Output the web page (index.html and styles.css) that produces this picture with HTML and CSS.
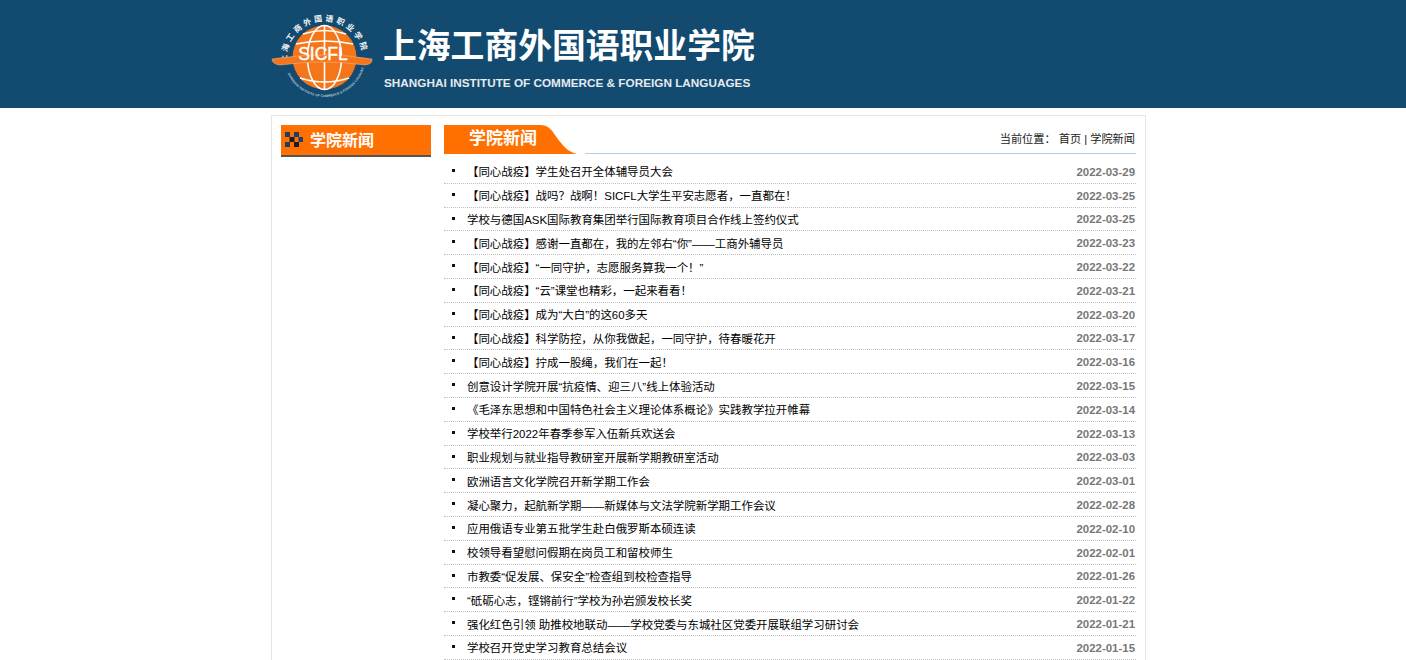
FILE: index.html
```html
<!DOCTYPE html>
<html lang="zh-CN">
<head>
<meta charset="utf-8">
<title>学院新闻</title>
<link rel="stylesheet" href="styles.css">
</head>
<body>
<header class="site-header">
  <div class="brand">
    <svg class="emblem" width="106" height="94" viewBox="0 0 106 94">
      <defs>
        <path id="arcTop" d="M17 56 A38 38 0 0 1 92 44"/>
        <path id="arcBottom" d="M15 59 A41 41 0 0 0 94 59"/>
      </defs>
      <text class="emblem-cn"><textPath href="#arcTop" startOffset="1">上海工商外国语职业学院</textPath></text>
      <text class="emblem-en"><textPath href="#arcBottom" startOffset="7">SHANGHAI INSTITUTE OF COMMERCE &amp; FOREIGN LANGUAGES</textPath></text>
      <circle cx="54.500" cy="49.500" r="32" fill="#f5761a"/>
      <g fill="none" stroke="#fff" stroke-width="1.600">
        <ellipse cx="54.500" cy="49.500" rx="17" ry="32"/>
        <path d="M54.500 17.500V81.500"/>
        <path d="M33 26Q54.500 19 76 26"/>
        <path d="M26 36Q54.500 30 83 36"/>
        <path d="M30 70Q54.500 78 79 70"/>
      </g>
      <path d="M2 51Q54 43 102 51Q103 56 95 57Q54 51 10 57Q2 56 2 51Z" fill="#f5761a" stroke="#f0c09a" stroke-width=".5"/>
      <text class="emblem-mark" x="53" y="52" text-anchor="middle">SICFL</text>
    </svg>
    <div class="brand-names">
      <div class="brand-cn">上海工商外国语职业学院</div>
      <div class="brand-en">SHANGHAI INSTITUTE OF COMMERCE &amp; FOREIGN LANGUAGES</div>
    </div>
  </div>
</header>
<main class="page">
  <aside class="side">
    <h2 class="side-title">
      <svg class="checker" width="18" height="15" viewBox="0 0 18 15">
        <rect class="cell-navy" x="0" y="0" width="5" height="5"/>
        <rect class="cell-navy" x="9" y="0" width="5" height="5"/>
        <rect class="cell-dark" x="4.500" y="5" width="5" height="5"/>
        <rect class="cell-navy" x="13.500" y="5" width="4.500" height="5"/>
        <rect class="cell-navy" x="0" y="10" width="5" height="5"/>
        <rect class="cell-dark" x="9" y="10" width="5" height="5"/>
      </svg>
      学院新闻
    </h2>
  </aside>
  <section class="content">
    <div class="content-head">
      <h1 class="tab">
        <svg class="tab-shape" width="133" height="29" viewBox="0 0 133 29"><path d="M0 0H96C104 0 108 5 111 10C116 17 120 22 124 25C127 27 130 28 133 29H0Z" fill="#ff7000"/></svg>
        <span class="tab-text">学院新闻</span>
      </h1>
      <div class="crumb">当前位置：&nbsp;首页 | 学院新闻</div>
    </div>
    <ul class="news">
      <li><a>【同心战疫】学生处召开全体辅导员大会</a><time>2022-03-29</time></li>
      <li><a>【同心战疫】战吗？战啊！SICFL大学生平安志愿者，一直都在！</a><time>2022-03-25</time></li>
      <li><a>学校与德国ASK国际教育集团举行国际教育项目合作线上签约仪式</a><time>2022-03-25</time></li>
      <li><a>【同心战疫】感谢一直都在，我的左邻右“你”——工商外辅导员</a><time>2022-03-23</time></li>
      <li><a>【同心战疫】“一同守护，志愿服务算我一个！”</a><time>2022-03-22</time></li>
      <li><a>【同心战疫】“云”课堂也精彩，一起来看看！</a><time>2022-03-21</time></li>
      <li><a>【同心战疫】成为“大白”的这60多天</a><time>2022-03-20</time></li>
      <li><a>【同心战疫】科学防控，从你我做起，一同守护，待春暖花开</a><time>2022-03-17</time></li>
      <li><a>【同心战疫】拧成一股绳，我们在一起！</a><time>2022-03-16</time></li>
      <li><a>创意设计学院开展“抗疫情、迎三八”线上体验活动</a><time>2022-03-15</time></li>
      <li><a>《毛泽东思想和中国特色社会主义理论体系概论》实践教学拉开帷幕</a><time>2022-03-14</time></li>
      <li><a>学校举行2022年春季参军入伍新兵欢送会</a><time>2022-03-13</time></li>
      <li><a>职业规划与就业指导教研室开展新学期教研室活动</a><time>2022-03-03</time></li>
      <li><a>欧洲语言文化学院召开新学期工作会</a><time>2022-03-01</time></li>
      <li><a>凝心聚力，起航新学期——新媒体与文法学院新学期工作会议</a><time>2022-02-28</time></li>
      <li><a>应用俄语专业第五批学生赴白俄罗斯本硕连读</a><time>2022-02-10</time></li>
      <li><a>校领导看望慰问假期在岗员工和留校师生</a><time>2022-02-01</time></li>
      <li><a>市教委“促发展、保安全”检查组到校检查指导</a><time>2022-01-26</time></li>
      <li><a>“砥砺心志，铿锵前行”学校为孙岩颁发校长奖</a><time>2022-01-22</time></li>
      <li><a>强化红色引领 助推校地联动——学校党委与东城社区党委开展联组学习研讨会</a><time>2022-01-21</time></li>
      <li><a>学校召开党史学习教育总结会议</a><time>2022-01-15</time></li>
    </ul>
  </section>
</main>
</body>
</html>
```
FILE: styles.css
```css
* { box-sizing: border-box; }
html, body { margin: 0; padding: 0; background: #fff; }
body {
  font-family: "Liberation Sans", "Noto Sans CJK SC", sans-serif;
  font-size: 11.44px;
  color: #000;
}
.site-header { height: 108px; background: #134a70; }
.brand {
  width: 875px;
  margin-left: 271px;
  height: 108px;
  display: flex;
  align-items: flex-start;
}
.emblem { flex: none; margin: 8px 0 0 -1px; }
.emblem-cn { font: 700 8px "Noto Sans CJK SC", sans-serif; fill: #f2f5f7; letter-spacing: 2.600px; }
.emblem-en { font: 700 3.300px "Liberation Sans", sans-serif; fill: #b9c9d6; }
.emblem-mark { font: 400 17.500px "Liberation Sans", sans-serif; fill: #fff; stroke: #fff; stroke-width: .4px; }
.cell-navy { fill: #1b3f66; }
.cell-dark { fill: #1c1c22; }
.brand-names { margin-left: 7px; width: 372px; }
.brand-cn {
  margin-top: 20px;
  height: 48px;
  font: 700 33.800px/48px "Noto Sans CJK SC", sans-serif;
  color: #fff;
  white-space: nowrap;
}
.brand-en {
  margin-top: 7px;
  padding-left: 1px;
  font: 700 11.750px/16px "Liberation Sans", sans-serif;
  color: #e4eaef;
  white-space: nowrap;
}
.page {
  width: 875px;
  height: 700px;
  margin: 7px 0 0 271px;
  padding: 9px 9px 0 9px;
  border: 1px solid #e2e6ea;
  display: flex;
  align-items: flex-start;
  gap: 13px;
}
.side { width: 150px; flex: none; }
.side-title {
  margin: 0;
  height: 32px;
  padding: 0 0 2px 4px;
  display: flex;
  align-items: center;
  gap: 7px;
  background: #ff7000;
  border-bottom: 2px solid #555;
  color: #fff;
  font: 700 16px "Noto Sans CJK SC", sans-serif;
}
.checker { flex: none; }
.content { width: 692px; flex: none; }
.content-head {
  height: 35px;
  position: relative;
  display: flex;
  justify-content: space-between;
  align-items: flex-start;
}
.content-head::after {
  content: "";
  position: absolute;
  left: 141px;
  right: 0;
  top: 28px;
  height: 1px;
  background: #a9d3e4;
}
.tab {
  margin: 0;
  position: relative;
  width: 133px;
  height: 29px;
  color: #fff;
  font: 700 17px/23px "Noto Sans CJK SC", sans-serif;
}
.tab-shape { position: absolute; left: 0; top: 0; }
.tab-text { position: absolute; left: 25px; top: 0; }
.crumb { font-size: 11.200px; line-height: 14px; margin: 7px 1px 0 0; color: #222; }
.news { list-style: none; margin: 0; padding: 0; }
.news li {
  height: 23.800px;
  padding: 0 1px 0 23px;
  position: relative;
  display: flex;
  justify-content: space-between;
  align-items: center;
  border-bottom: 1px dotted #c0c0c0;
}
.news li::before {
  content: "";
  position: absolute;
  left: 8px;
  top: 9px;
  width: 3px;
  height: 3px;
  background: #111;
}
.news a { color: #000; white-space: nowrap; }
.news time { font-weight: 700; color: #777; padding-top: 1px; }
```
